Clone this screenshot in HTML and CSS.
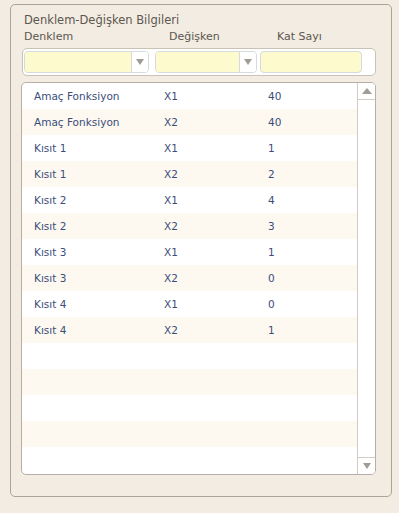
FILE: index.html
```html
<!DOCTYPE html>
<html lang="tr">
<head>
    <meta charset="UTF-8">
    <title>Denklem-Değişken Bilgileri</title>
    <link rel="stylesheet" href="styles.css">
</head>
<body>
    <div class="panel">
        <div class="panel-title">Denklem-Değişken Bilgileri</div>

        <div class="col-labels">
            <span class="lbl lbl-denklem">Denklem</span>
            <span class="lbl lbl-degisken">Değişken</span>
            <span class="lbl lbl-kat">Kat Sayı</span>
        </div>

        <div class="filter-box">
            <div class="combo combo-denklem">
                <div class="combo-field"></div>
                <div class="combo-btn"><span class="tri-down"></span></div>
            </div>
            <div class="combo combo-degisken">
                <div class="combo-field"></div>
                <div class="combo-btn"><span class="tri-down"></span></div>
            </div>
            <div class="text-field"></div>
        </div>

        <div class="grid">
            <div class="rows">
                <div class="row"><span class="c1">Amaç Fonksiyon</span><span class="c2">X1</span><span class="c3">40</span></div>
                <div class="row alt"><span class="c1">Amaç Fonksiyon</span><span class="c2">X2</span><span class="c3">40</span></div>
                <div class="row"><span class="c1">Kısıt 1</span><span class="c2">X1</span><span class="c3">1</span></div>
                <div class="row alt"><span class="c1">Kısıt 1</span><span class="c2">X2</span><span class="c3">2</span></div>
                <div class="row"><span class="c1">Kısıt 2</span><span class="c2">X1</span><span class="c3">4</span></div>
                <div class="row alt"><span class="c1">Kısıt 2</span><span class="c2">X2</span><span class="c3">3</span></div>
                <div class="row"><span class="c1">Kısıt 3</span><span class="c2">X1</span><span class="c3">1</span></div>
                <div class="row alt"><span class="c1">Kısıt 3</span><span class="c2">X2</span><span class="c3">0</span></div>
                <div class="row"><span class="c1">Kısıt 4</span><span class="c2">X1</span><span class="c3">0</span></div>
                <div class="row alt"><span class="c1">Kısıt 4</span><span class="c2">X2</span><span class="c3">1</span></div>
                <div class="row"></div>
                <div class="row alt"></div>
                <div class="row"></div>
                <div class="row alt"></div>
                <div class="row"></div>
            </div>
            <div class="scrollbar">
                <div class="sb-btn sb-up"><span class="tri-up"></span></div>
                <div class="sb-track"></div>
                <div class="sb-btn sb-down"><span class="tri-down"></span></div>
            </div>
        </div>
    </div>
</body>
</html>
```

FILE: styles.css
```css
* {
    margin: 0;
    padding: 0;
    box-sizing: border-box;
}

body {
    background: #f3ece2;
    font-family: "DejaVu Sans", Verdana, sans-serif;
    font-size: 11px;
    color: #5c574f;
    padding: 4px 8px 0 10px;
}

.panel {
    width: 382px;
    height: 493px;
    border: 1px solid #aba396;
    border-radius: 5px;
    padding: 8px 15px 0 11px;
}

.panel-title {
    padding-left: 2px;
    height: 17px;
    line-height: 15px;
    font-size: 11.5px;
}

.col-labels {
    display: flex;
    height: 18px;
    padding-left: 2px;
}

.lbl-denklem {
    width: 145px;
}

.lbl-degisken {
    width: 108px;
}

.filter-box {
    display: flex;
    height: 28px;
    background: #fff;
    border: 1px solid #c9c2b6;
    border-radius: 5px;
    padding: 2px 13px 2px 1px;
    margin-bottom: 6px;
}

.combo {
    display: flex;
    border: 1px solid #d7dadc;
    border-radius: 4px;
    overflow: hidden;
}

.combo-denklem {
    width: 125px;
}

.combo-degisken {
    width: 102px;
    margin: 0 3px 0 6px;
}

.combo-field {
    flex: 1;
    background: #fdfbcd;
}

.combo-btn {
    width: 17px;
    background: #fff;
    border-left: 1px solid #d7dadc;
    display: flex;
    align-items: center;
    justify-content: center;
}

.text-field {
    flex: 1;
    background: #fdfbcd;
    border: 1px solid #d7dadc;
    border-radius: 4px;
}

.tri-down {
    width: 0;
    height: 0;
    border-left: 4px solid transparent;
    border-right: 4px solid transparent;
    border-top: 6px solid #a19c93;
}

.tri-up {
    width: 0;
    height: 0;
    border-left: 5px solid transparent;
    border-right: 5px solid transparent;
    border-bottom: 6px solid #a19c93;
}

.grid {
    display: flex;
    height: 393px;
    margin-left: -1px;
    background: #fff;
    border: 1px solid #b7afa3;
    border-radius: 5px;
    overflow: hidden;
}

.rows {
    flex: 1;
    color: #3b4d7c;
    font-size: 10.5px;
}

.row {
    display: flex;
    align-items: center;
    height: 26px;
    padding-left: 12px;
}

.row.alt {
    background: #fdf9f0;
}

.c1 {
    width: 130px;
}

.c2 {
    width: 104px;
}

.scrollbar {
    width: 18px;
    display: flex;
    flex-direction: column;
    border-left: 1px solid #d2ccc2;
}

.sb-btn {
    height: 17px;
    display: flex;
    align-items: center;
    justify-content: center;
    background: #fff;
}

.sb-up {
    border-bottom: 1px solid #d2ccc2;
}

.sb-down {
    border-top: 1px solid #d2ccc2;
}

.sb-track {
    flex: 1;
}
```
